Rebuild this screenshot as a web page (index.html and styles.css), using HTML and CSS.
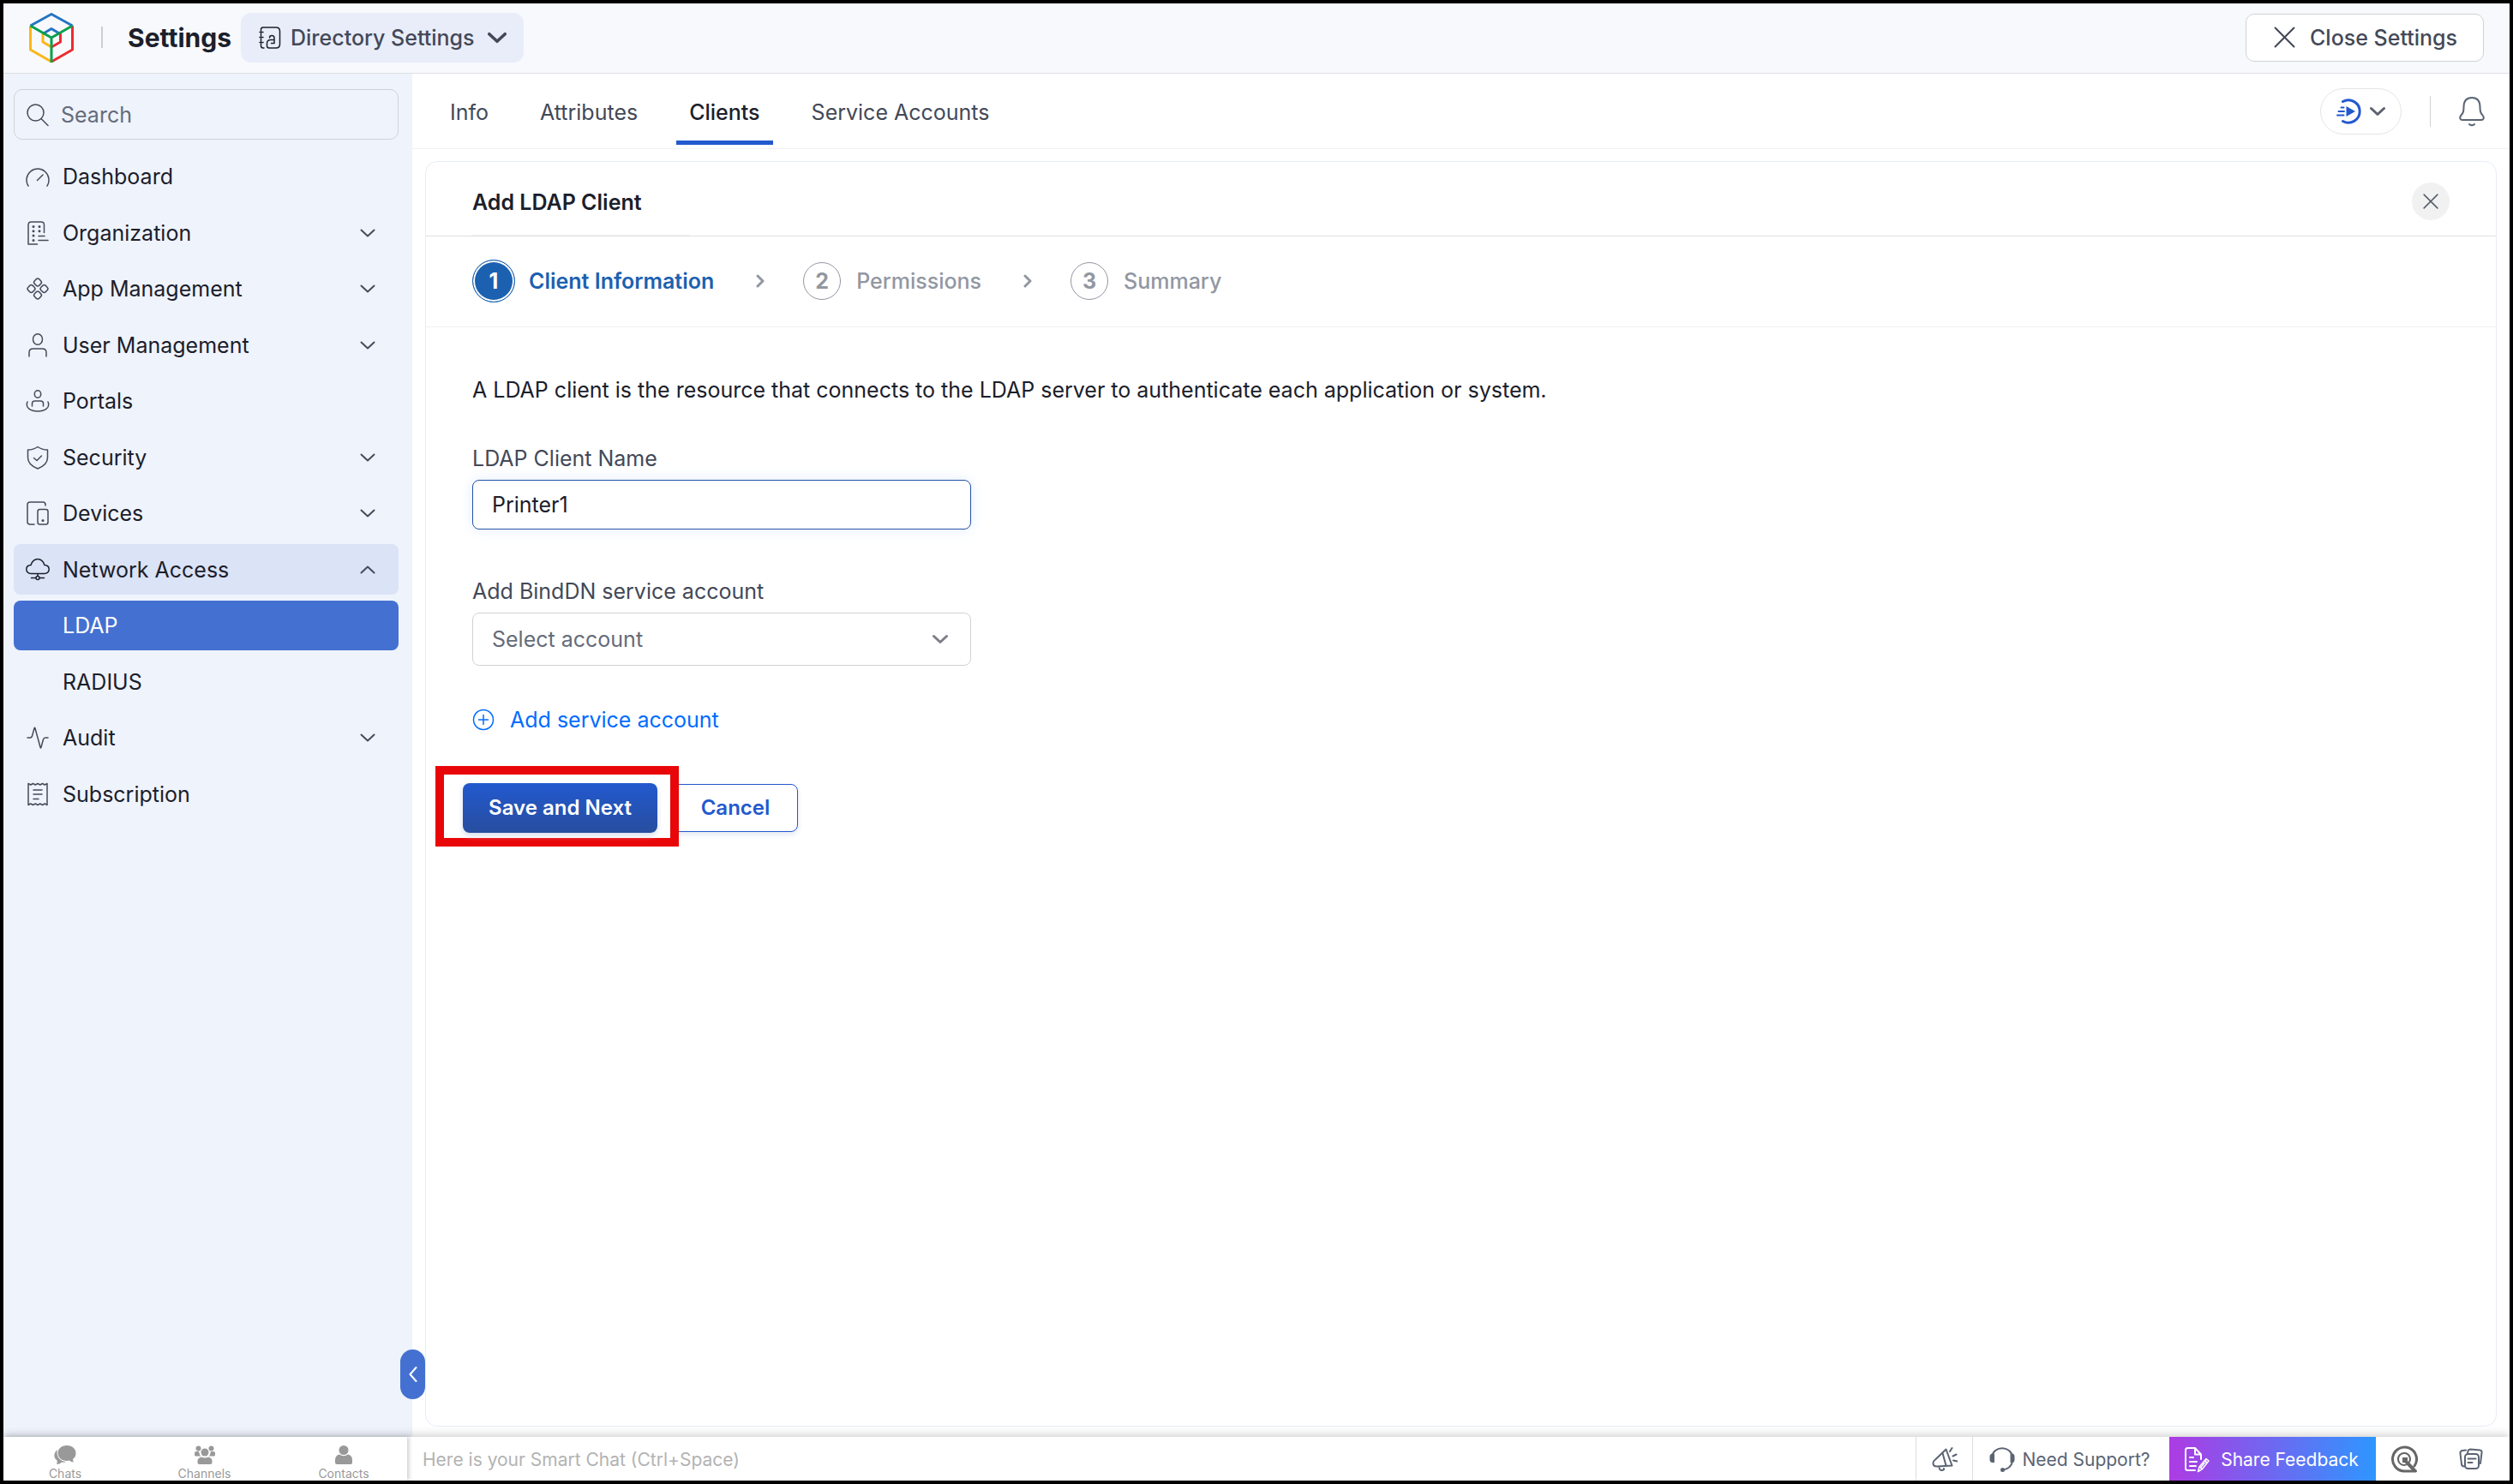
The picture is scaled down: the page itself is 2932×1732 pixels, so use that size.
FILE: index.html
```html
<!DOCTYPE html>
<html lang="en">
<head>
<meta charset="utf-8">
<title>Directory Settings - LDAP Clients</title>
<link rel="stylesheet" href="styles.css">
</head>
<body>
<svg class="sprite" aria-hidden="true">
  <symbol id="chevron" viewBox="0 0 18 18"><path d="M1.5 5.5 9 12.5 16.5 5.5"/></symbol>
  <symbol id="cross" viewBox="0 0 24 24"><path d="M1.500 1.500 22.500 22.500M22.500 1.500 1.500 22.500"/></symbol>
  <symbol id="step-arrow" viewBox="0 0 10 16"><path d="M2 2 8 8 2 14"/></symbol>
</svg>

<div class="app">
  <header class="topbar">
    <a class="logo" href="#" aria-label="Home">
      <svg viewBox="0 0 52 58" width="52" height="58">
        <path class="logo-yellow" d="M1.500 15V43L26 57M16 24V34L26 40"/>
        <path class="logo-red" d="M50.500 15V43L26 57M36.500 24V34L26 40"/>
        <path class="logo-blue" d="M1.500 15 26 1.500 50.500 15M16 24.500 26 18.500 36 24.500"/>
        <path class="logo-green" d="M1.500 15 26 29 50.500 15M26 29V58"/>
      </svg>
    </a>
    <span class="topbar-divider"></span>
    <h1 class="app-title">Settings</h1>
    <button class="directory-menu" type="button">
      <svg class="icon" viewBox="0 0 28 28" width="28" height="28"><path d="M3.500 6V4.500Q3.500 2 6 2H21Q25.500 2 25.500 6.500V21.500Q25.500 26 21 26H13Q10.500 26 10.500 23.500V20.500Q10.500 16.500 15 16.500H19V14.500Q19 11.500 16.200 11.500 13.500 11.500 13.500 14M19 16.500V20.500H15.500M3.500 9V12M3.500 15V18M3.500 21V23.500Q3.500 26 6 26H7M2 7.500H6M2 13.500H6M2 19.500H6"/></svg>
      Directory Settings
      <svg class="menu-chevron" width="22" height="22"><use href="#chevron"/></svg>
    </button>
    <button class="close-settings" type="button"><svg class="close-icon" width="25" height="25"><use href="#cross"/></svg>Close Settings</button>
  </header>

  <div class="middle">
    <aside class="sidebar">
      <label class="search">
        <svg class="icon" viewBox="0 0 28 28" width="28" height="28"><circle cx="11.500" cy="11.500" r="9.500"/><path d="M18 18.500 26 26.500"/></svg>
        <input type="search" placeholder="Search" aria-label="Search">
      </label>
      <nav class="nav" aria-label="Settings">
        <a class="nav-item" href="#"><svg class="icon" viewBox="0 0 28 28" width="28" height="28"><path d="M3 25A13 13 0 1 1 25 25M13.500 18.500 20 12"/></svg>Dashboard</a>
        <button class="nav-item" type="button"><svg class="icon" viewBox="0 0 28 28" width="28" height="28"><path d="M13.500 27H3V4.500Q3 1 6.500 1H18Q21.500 1 21.500 4.500V13.500M15 17.500H22M15 22.500H26"/><path class="dots" d="M9 6.500h0M16 6.500h0M9 11.800h0M16 11.800h0M9 17h0M9 22.500h0"/></svg>Organization<svg class="nav-chevron" width="18" height="18"><use href="#chevron"/></svg></button>
        <button class="nav-item" type="button"><svg class="icon" viewBox="0 0 28 28" width="28" height="28"><g transform="translate(14 14)"><rect x="-3.800" y="-3.800" width="7.600" height="7.600" rx="2.500" transform="translate(0 -7.500) rotate(45)"/><rect x="-3.800" y="-3.800" width="7.600" height="7.600" rx="2.500" transform="translate(7.500 0) rotate(45)"/><rect x="-3.800" y="-3.800" width="7.600" height="7.600" rx="2.500" transform="translate(0 7.500) rotate(45)"/><rect x="-3.800" y="-3.800" width="7.600" height="7.600" rx="2.500" transform="translate(-7.500 0) rotate(45)"/></g></svg>App Management<svg class="nav-chevron" width="18" height="18"><use href="#chevron"/></svg></button>
        <button class="nav-item" type="button"><svg class="icon" viewBox="0 0 28 28" width="28" height="28"><ellipse cx="14" cy="7" rx="5.500" ry="6.200"/><path d="M4 27V22.500Q4 18 8.500 18H19.500Q24 18 24 22.500V27"/></svg>User Management<svg class="nav-chevron" width="18" height="18"><use href="#chevron"/></svg></button>
        <a class="nav-item" href="#"><svg class="icon" viewBox="0 0 28 28" width="28" height="28"><ellipse cx="14" cy="6" rx="3.700" ry="4.200"/><path d="M7.500 20V17Q7.500 14 10.500 14H17.500Q20.500 14 20.500 17V20M2 15C-1 22 6 26 14 26S29 22 26 15"/></svg>Portals</a>
        <button class="nav-item" type="button"><svg class="icon" viewBox="0 0 28 28" width="28" height="28"><path d="M14 1.500Q19 5 25.500 5V14Q25.500 22.500 14 27 2.500 22.500 2.500 14V5Q9 5 14 1.500ZM9.500 14.500 13 17.500 18.500 12"/></svg>Security<svg class="nav-chevron" width="18" height="18"><use href="#chevron"/></svg></button>
        <button class="nav-item" type="button"><svg class="icon" viewBox="0 0 28 28" width="28" height="28"><path d="M10 27H5Q2 27 2 24V4Q2 1 5 1H20Q23 1 23 4V5"/><rect x="14" y="9.500" width="12" height="17.500" rx="2.500"/><path class="dots" d="M20 22.500h0"/></svg>Devices<svg class="nav-chevron" width="18" height="18"><use href="#chevron"/></svg></button>
        <button class="nav-item nav-open" type="button" aria-expanded="true"><svg class="icon" viewBox="0 0 28 28" width="28" height="28"><path d="M6.500 18.500C-1 18-1 9 6 8.500 9-1 19-1 22 8.500 29 9 29 18 21.500 18.500ZM14 18.500V21M6.500 23.500H11.500M16.500 23.500H21.500"/><circle cx="14" cy="23.500" r="2"/></svg>Network Access<svg class="nav-chevron" width="18" height="18"><use href="#chevron"/></svg></button>
        <a class="nav-item nav-sub nav-current" href="#" aria-current="page">LDAP</a>
        <a class="nav-item nav-sub" href="#">RADIUS</a>
        <button class="nav-item" type="button"><svg class="icon" viewBox="0 0 28 28" width="28" height="28"><path d="M2 14H5Q7 14 7.500 12L10 3Q10.500 1.500 11 3L17 25Q17.500 27 18 25L20.500 16Q21 14 23 14H26"/></svg>Audit<svg class="nav-chevron" width="18" height="18"><use href="#chevron"/></svg></button>
        <a class="nav-item" href="#"><svg class="icon" viewBox="0 0 28 28" width="28" height="28"><path d="M3 1.500 5.800 3 8.500 1.500 11.300 3 14 1.500 16.800 3 19.500 1.500 22.300 3 25 1.500V26.500L22.300 25 19.500 26.500 16.800 25 14 26.500 11.300 25 8.500 26.500 5.800 25 3 26.500ZM9 9H19M9 14H19M9 19.500H15"/></svg>Subscription</a>
      </nav>
      <button class="collapse" type="button" aria-label="Collapse sidebar"><svg viewBox="0 0 10 20" width="10" height="20"><path d="M8.500 2 1.500 10 8.500 18"/></svg></button>
    </aside>

    <main class="content">
      <div class="tabbar">
        <nav class="tabs" aria-label="LDAP">
          <a class="tab" href="#">Info</a>
          <a class="tab" href="#">Attributes</a>
          <a class="tab tab-active" href="#" aria-current="page">Clients</a>
          <a class="tab" href="#">Service Accounts</a>
        </nav>
        <button class="run-menu" type="button" aria-label="Guides">
          <svg class="run-icon" viewBox="0 0 30 30" width="30" height="30"><path class="ring" d="M7.500 3.500A13.200 13.200 0 1 1 7.500 26.500"/><path class="play" d="M11.500 9V21L22 15Z"/><path class="speed" d="M5.500 10.500H8.500M2.500 15H9M1 19.500H8.500"/></svg>
          <svg class="run-chevron" width="18" height="18"><use href="#chevron"/></svg>
        </button>
        <span class="tabbar-divider"></span>
        <button class="bell" type="button" aria-label="Notifications"><svg viewBox="0 0 30 36" width="30" height="36"><path d="M5.500 13C5.500 5 9 2 15 2S24.500 5 24.500 13C24.500 19 25.500 20 27.500 22.500 30 25.500 28.500 28 26 28H4C1.500 28 0 25.500 2.500 22.500 4.500 20 5.500 19 5.500 13ZM12 33Q15 35.500 18 33"/></svg></button>
      </div>

      <section class="card">
        <div class="card-head">
          <h2 class="card-title">Add LDAP Client</h2>
          <button class="card-close" type="button" aria-label="Close"><svg width="18" height="18"><use href="#cross"/></svg></button>
        </div>
        <ol class="steps">
          <li class="step step-active"><span class="step-number">1</span>Client Information</li>
          <li class="step"><svg class="step-arrow" width="10" height="16"><use href="#step-arrow"/></svg><span class="step-number">2</span>Permissions</li>
          <li class="step"><svg class="step-arrow" width="10" height="16"><use href="#step-arrow"/></svg><span class="step-number">3</span>Summary</li>
        </ol>
        <form class="client-form">
          <p class="intro">A LDAP client is the resource that connects to the LDAP server to authenticate each application or system.</p>
          <div class="field">
            <label for="client-name">LDAP Client Name</label>
            <input class="text-box" id="client-name" type="text" value="Printer1">
          </div>
          <div class="field">
            <label for="account">Add BindDN service account</label>
            <div class="select-wrap">
              <select class="text-box" id="account"><option>Select account</option></select>
              <svg class="select-chevron" width="18" height="18"><use href="#chevron"/></svg>
            </div>
          </div>
          <a class="add-account" href="#"><svg viewBox="0 0 26 26" width="26" height="26"><circle cx="13" cy="13" r="11.500"/><path d="M13 7.500V18.500M7.500 13H18.500"/></svg>Add service account</a>
          <div class="actions">
            <div class="highlight"><button class="save" type="button">Save and Next</button></div>
            <button class="cancel" type="button">Cancel</button>
          </div>
        </form>
      </section>
    </main>
  </div>

  <footer class="chatbar">
    <nav class="chat-tabs" aria-label="Chat">
      <a class="chat-tab" href="#"><svg viewBox="0 0 26 22" width="26" height="22"><path d="M4 5C-1 9-.500 15 3.500 17.500 4 19.500 3.500 21 3 22 6 22 8 20.500 9 19.500 12 20 13 19.500 14 19 7 18 2 13 4 5Z"/><path d="M15 0C8.500 0 4.500 4 4.500 9S9 18 15 18C16 18 17 18 18 17.600 19.500 19 21 19.500 23 19.500 22.500 18.500 22 17 22 16 24.500 14 25.500 12 25.500 9 25.500 4 21.500 0 15 0Z"/></svg>Chats</a>
      <a class="chat-tab" href="#"><svg viewBox="0 0 26 22" width="26" height="22"><circle cx="5.500" cy="3.500" r="3"/><circle cx="20.500" cy="3.500" r="3"/><circle cx="13" cy="8" r="4.500"/><path d="M3 7H6Q7 12 8.500 12.500H2.500Q1 12.500 1 11V9Q1 7 3 7ZM23 7H20Q19 12 17.500 12.500H23.500Q25 12.500 25 11V9Q25 7 23 7Z"/><path d="M9 13.500Q13 15.500 17 13.500 21.500 14.500 21.500 18V20Q21.500 22 19.500 22H6.500Q4.500 22 4.500 20V18Q4.500 14.500 9 13.500Z"/></svg>Channels</a>
      <a class="chat-tab" href="#"><svg viewBox="0 0 26 22" width="26" height="22"><circle cx="13" cy="5.500" r="5.500"/><path d="M8 10.500Q13 14 18 10.500 23 11.500 23 17V20Q23 22 21 22H5Q3 22 3 20V17Q3 11.500 8 10.500Z"/></svg>Contacts</a>
    </nav>
    <input class="smart-chat" type="text" placeholder="Here is your Smart Chat (Ctrl+Space)" aria-label="Smart Chat">
    <button class="announce" type="button" aria-label="Announcements"><svg viewBox="0 0 30 30" width="30" height="30"><path d="M16.500 3.500 23.500 22.500 6 23.500Q2 23.500 1.500 20.500 1 17.500 4 15.500ZM12.500 8 16.500 22.500M8.500 24.500Q9 28.500 12 28 14.500 27.500 14 26M21 6 23.500 2M24.500 11.500 28.500 9.500M25 16.500 29.500 17.500"/></svg></button>
    <a class="support" href="#"><svg viewBox="0 0 30 30" width="30" height="30"><path d="M3 11C5-2 25-2 27 11M27 17Q25 25 16 26.500"/><path class="solid" d="M6 7.500V18H4Q.500 18 .500 14.500V11Q.500 7.500 4 7.500ZM24.500 7.500V18H26.500Q29.500 18 29.500 14.500V11Q29.500 7.500 26.500 7.500Z"/><circle class="solid" cx="15.500" cy="26.500" r="2.500"/></svg>Need Support?</a>
    <a class="feedback" href="#"><svg viewBox="0 0 30 30" width="30" height="30"><path d="M13 27H4.500Q2 27 2 24.500V3.500Q2 1 4.500 1H13L20 8.500V14M13 1V8.500H20M7 12H11M7 17H15M7 22H14"/><path class="thin" d="M16.500 28.500 18 23 26 13.500 29 16 21.500 25.500ZM18 23 21.500 25.500M24 16 27 18.500M19.500 24 26 16"/></svg>Share Feedback</a>
    <button class="quick" type="button" aria-label="Quick search"><svg viewBox="0 0 32 32" width="32" height="32"><path class="q-ring" d="M22 22 29.500 30H16A14 14 0 1 1 28 24"/><path class="q-inner" d="M19.500 22A7 7 0 1 1 22 19.500"/><path class="q-dot" d="M14 14H20V18L30 29 27 31 16.500 20H14Z"/></svg></button>
    <button class="notes" type="button" aria-label="Notes"><svg viewBox="0 0 28 26" width="28" height="26"><rect x="7" y="7" width="16" height="17" rx="3.500"/><path d="M10.500 12.500H19.500M10.500 17H15.500M6 21.500Q3.500 21.500 3 19L1.500 6.500Q1 3.500 4 3L8 2.500M10 6.500 10.500 3.500Q11 1.500 13.500 1.500L24.500 2.500Q27 3 26.500 5.500L25 18"/></svg></button>
  </footer>
</div>
</body>
</html>
```
FILE: styles.css
```css
* { box-sizing: border-box; }

body {
  margin: 0;
  background: #000;
  color: #1b202b;
  font: 400 25px/30px Inter, "Liberation Sans", sans-serif;
}

button, input, select { font: inherit; color: inherit; }
button { padding: 0; border: 0; background: none; text-align: left; }
a { color: inherit; text-decoration: none; }
h1, h2, p, ol { margin: 0; padding: 0; }
svg { flex: none; fill: none; stroke: currentColor; stroke-linecap: round; stroke-linejoin: round; }
input::placeholder { color: inherit; opacity: 1; }

.sprite { position: absolute; width: 0; height: 0; }
.icon { stroke-width: 1.5px; color: #454b59; }
.dots { stroke-width: 3px; }

.app {
  display: grid;
  grid-template-rows: auto 1fr auto;
  min-height: 100vh;
  padding: 4px;
}

/* Top bar */
.topbar {
  display: flex;
  align-items: center;
  height: 82px;
  padding: 0 30px 2px;
  background: #f8f9fd;
  border-bottom: 1px solid #dddfe3;
}
.logo { display: flex; }
.logo svg { stroke-width: 3px; stroke-linecap: butt; }
.logo-yellow { stroke: #fbb618; }
.logo-red { stroke: #ee2b32; }
.logo-blue { stroke: #2474c2; }
.logo-green { stroke: #0a9f4d; }
.topbar-divider { width: 2px; height: 25px; margin: 0 29px 0 32px; background: #ccced2; }
.app-title { font-size: 30px; font-weight: 700; line-height: 36px; }
.directory-menu {
  display: flex;
  align-items: center;
  gap: 10px;
  height: 58px;
  margin-left: 11px;
  padding: 0 20px;
  border-radius: 12px;
  background: #e9edfa;
  color: #434957;
  font-weight: 500;
}
.directory-menu .icon { color: #1b202b; }
.menu-chevron { margin-left: 5px; stroke-width: 3px; }
.close-settings {
  display: flex;
  align-items: center;
  gap: 17px;
  height: 56px;
  margin-left: auto;
  padding: 0 30px 0 32px;
  border: 1px solid #d0d2d6;
  border-radius: 10px;
  background: #fff;
  color: #434957;
  font-weight: 500;
}
.close-icon { stroke-width: 2px; }

.middle { display: grid; grid-template-columns: 477px 1fr; }

/* Sidebar */
.sidebar { position: relative; padding: 18px 16px 0 12px; background: #eff3fc; }
.search {
  display: flex;
  align-items: center;
  gap: 13px;
  height: 59px;
  padding: 0 13px;
  border: 1px solid #cfd2d8;
  border-radius: 10px;
}
.search input { flex: 1; min-width: 0; padding: 0; border: 0; background: none; color: #656c7a; outline: 0; }
.nav { display: grid; grid-auto-rows: 58px 59px; row-gap: 7px; margin-top: 14px; }
.nav-item {
  display: flex;
  align-items: center;
  gap: 15px;
  padding: 0 27px 0 14px;
  border-radius: 8px;
}
.nav-chevron { margin-left: auto; color: #454b59; stroke-width: 2px; }
.nav-open { background: #dbe3f6; }
.nav-open .icon { color: #1b202b; }
.nav-open .nav-chevron { transform: rotate(180deg); }
.nav-sub { padding-left: 57px; }
.nav-current { background: #4471d1; color: #fff; }
.collapse {
  position: absolute;
  right: -15px;
  bottom: 44px;
  display: flex;
  align-items: center;
  justify-content: center;
  width: 29px;
  height: 58px;
  border-radius: 15px;
  background: #4471d1;
  color: #fff;
}
.collapse svg { stroke-width: 2px; }

/* Content */
.content { display: flex; flex-direction: column; background: #fff; }
.tabbar {
  display: flex;
  align-items: center;
  height: 88px;
  padding: 0 29px;
  border-bottom: 1px solid #f0f1f3;
}
.tabs { display: flex; gap: 30px; height: 83px; align-self: flex-start; }
.tab {
  display: flex;
  align-items: center;
  padding: 12px 15px 0;
  border-bottom: 5px solid transparent;
  color: #434957;
}
.tab-active { border-color: #2259cf; color: #1b202b; font-weight: 500; }
.run-menu {
  display: flex;
  align-items: center;
  gap: 9px;
  height: 54px;
  margin-left: auto;
  padding: 0 18px;
  border: 1px solid #e4e5e8;
  border-radius: 27px;
}
.run-icon { color: #2259cf; }
.run-icon .ring { stroke-width: 3px; }
.run-icon .play { fill: currentColor; stroke: none; }
.run-icon .speed { stroke-width: 2px; }
.run-chevron { stroke-width: 3px; color: #5b6270; }
.tabbar-divider { width: 1px; height: 36px; margin: 0 33px; background: #d0d2d6; }
.bell { display: flex; color: #5b6473; }
.bell svg { stroke-width: 2px; }

.card {
  flex: 1;
  margin: 14px 15px 12px;
  border: 1px solid #e8ecfa;
  border-radius: 14px;
}
.card-head {
  display: flex;
  align-items: center;
  justify-content: space-between;
  height: 87px;
  padding: 0 54px;
  border-bottom: 1px solid #dfe1e4;
}
.card-title {
  align-self: stretch;
  min-width: 254px;
  padding-top: 3px;
  border-bottom: 1px solid #f1f1f1;
  font-size: 25px;
  font-weight: 600;
  line-height: 88px;
}
.card-close {
  display: flex;
  align-items: center;
  justify-content: center;
  width: 44px;
  height: 44px;
  margin-top: 5px;
  border-radius: 50%;
  background: #f1f1f1;
  color: #555c69;
}
.card-close svg { stroke-width: 2px; }

.steps {
  display: flex;
  align-items: center;
  height: 106px;
  padding: 0 54px 2px;
  border-bottom: 1px solid #f1f1f2;
  list-style: none;
}
.step { display: flex; align-items: center; color: #9297a2; font-weight: 500; }
.step-number {
  display: flex;
  align-items: center;
  justify-content: center;
  width: 44px;
  height: 44px;
  margin-right: 18px;
  border: 1px solid #9297a2;
  border-radius: 50%;
  font-weight: 700;
}
.step-active { color: #1b61b0; font-weight: 600; }
.step-active .step-number {
  width: 50px;
  height: 50px;
  margin-right: 16px;
  border-color: #1b61b0;
  background: #1b61b0;
  box-shadow: inset 0 0 0 2px #fff;
  color: #fff;
}
.step-arrow { margin: 0 45px 0 49px; stroke-width: 3px; }

.client-form { padding: 58px 54px; }
.field { display: grid; gap: 10px; width: 582px; color: #434957; }
.intro + .field { margin-top: 50px; }
.field + .field { margin-top: 57px; }
.text-box {
  width: 100%;
  height: 58px;
  padding: 0 22px;
  border: 1px solid #2452a6;
  border-radius: 8px;
  background: #fff;
  box-shadow: 0 0 16px #e3edfc;
  color: #1b202b;
  outline: 0;
}
.select-wrap { display: grid; align-items: center; }
.select-wrap > * { grid-area: 1 / 1; }
select.text-box {
  appearance: none;
  height: 62px;
  border-color: #d0d2d6;
  box-shadow: none;
  color: #656c7a;
}
.select-chevron { justify-self: end; margin-right: 27px; color: #7c7f86; stroke-width: 3px; pointer-events: none; }
.add-account {
  display: flex;
  align-items: center;
  gap: 18px;
  width: max-content;
  margin-top: 48px;
  color: #006cff;
}
.add-account svg { stroke-width: 1.5px; }

.actions { display: flex; align-items: center; margin: 39px 0 0 -43px; }
.highlight { z-index: 1; padding: 10px 15px 6px 22px; border: 10px solid #e90608; }
.save, .cancel { height: 58px; border-radius: 8px; font-size: 24px; text-align: center; }
.save {
  display: block;
  width: 227px;
  background: linear-gradient(#2259cf, #274e9f);
  box-shadow: 0 3px 6px #d6dced;
  color: #fff;
  font-weight: 600;
}
.cancel {
  width: 146px;
  height: 56px;
  margin: 4px 0 0 -7px;
  border: 1px solid #2259cf;
  background: #fff;
  box-shadow: 0 3px 6px #e3e7f1;
  color: #2259cf;
  font-weight: 600;
}

/* Chat bar */
.chatbar {
  position: relative;
  display: flex;
  height: 51px;
  background: #fff;
  box-shadow: 0 -2px 10px #0003;
  color: #5b6473;
  font-size: 21px;
}
.chat-tabs {
  display: flex;
  justify-content: space-between;
  width: 471px;
  padding: 0 34px 0 32px;
  box-shadow: 2px 0 5px #0003;
  color: #999;
  font-size: 14px;
  line-height: 17px;
}
.chat-tab { display: flex; flex-direction: column; align-items: center; gap: 2px; width: 80px; padding-top: 10px; }
.chat-tab svg { fill: currentColor; stroke: none; }
.smart-chat { flex: 1; min-width: 0; padding: 2px 18px 0; border: 0; background: none; color: #b3b3b3; outline: 0; }
.announce, .support, .feedback, .quick, .notes { display: flex; align-items: center; justify-content: center; }
.announce { width: 66px; border-left: 1px solid #dedede; }
.support { gap: 8px; width: 230px; padding: 2px 3px 0 0; border-left: 1px solid #dedede; }
.announce svg, .support svg { stroke-width: 2px; }
.solid { fill: currentColor; stroke: none; }
.feedback { gap: 13px; width: 241px; padding: 2px 3px 0 0; background: linear-gradient(90deg, #ad3be3, #2e96ff); color: #fff; }
.feedback svg { stroke-width: 2px; }
.feedback .thin { stroke-width: 1.5px; }
.quick { width: 66px; color: #666; }
.q-ring { stroke-width: 3px; }
.q-inner { stroke-width: 2px; }
.q-dot { fill: currentColor; stroke: none; }
.notes { width: 90px; }
.notes svg { stroke-width: 2px; }
```
